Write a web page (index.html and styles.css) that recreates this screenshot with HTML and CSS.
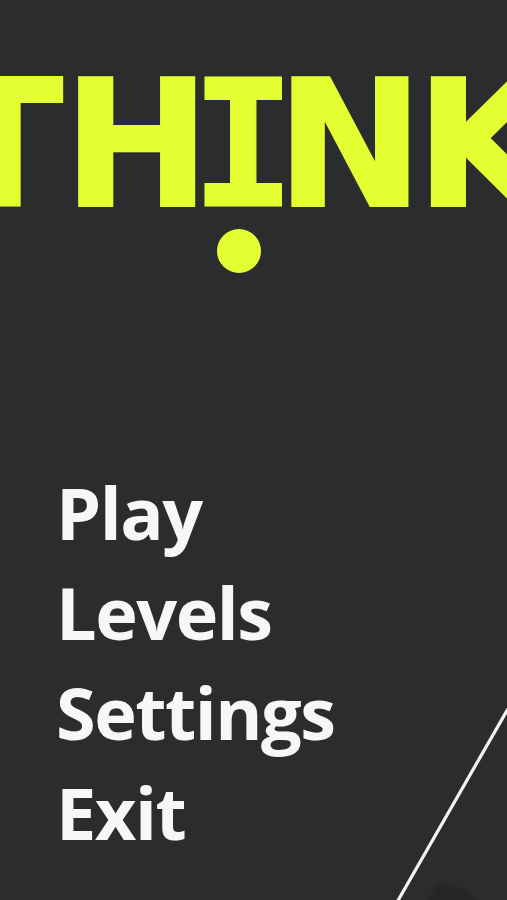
FILE: index.html
```html
<!DOCTYPE html>
<html>
<head>
<meta charset="utf-8">
<link rel="stylesheet" href="styles.css">
</head>
<body>
<main class="screen">
  <header class="logo">
    <h1 class="title">TH<span class="title-i">I</span><span class="title-n">N</span>K</h1>
    <div class="dot"></div>
  </header>
  <nav class="menu">
    <a class="menu-item">Play</a>
    <a class="menu-item">Levels</a>
    <a class="menu-item">Settings</a>
    <a class="menu-item">Exit</a>
  </nav>
  <svg class="deco" width="507" height="900" viewBox="0 0 507 900">
    <polygon points="440,880 468,892 480,900 428,900" fill="#252628"/>
    <line x1="521" y1="686" x2="396" y2="904" stroke="#f4f4f4" stroke-width="3.2"/>
  </svg>
</main>
</body>
</html>
```
FILE: styles.css
```css
html, body {
  margin: 0;
  padding: 0;
  background: #2b2c2e;
}
.screen {
  position: relative;
  width: 507px;
  height: 900px;
  overflow: hidden;
  background: #2b2c2e;
}
.logo {
  padding-top: 58px;
}
.title {
  margin: 0;
  display: flex;
  justify-content: center;
  white-space: nowrap;
  font-family: "DejaVu Sans", sans-serif;
  font-weight: 700;
  font-size: 176px;
  line-height: 176px;
  height: 176px;
  color: #e3ff31;
  -webkit-text-stroke: 2px #e3ff31;
  transform: translateX(-6px);
}
.title-i {
  display: inline-flex;
  justify-content: center;
  width: 66px;
  font-family: "DejaVu Sans Mono", monospace;
  -webkit-text-stroke: 1px #e3ff31;
}
.title-n {
  margin-right: -8px;
}
.dot {
  width: 44px;
  height: 44px;
  border-radius: 50%;
  background: #e3ff31;
  margin: -5px 0 0 217px;
}
.menu {
  display: flex;
  flex-direction: column;
  margin-top: 189px;
  padding-left: 56px;
}
.menu-item {
  font-family: "Open Sans", sans-serif;
  font-weight: 700;
  font-size: 72px;
  letter-spacing: -1.5px;
  line-height: 100px;
  color: #f7f7f7;
}
.deco {
  position: absolute;
  left: 0;
  top: 0;
  pointer-events: none;
}
```
